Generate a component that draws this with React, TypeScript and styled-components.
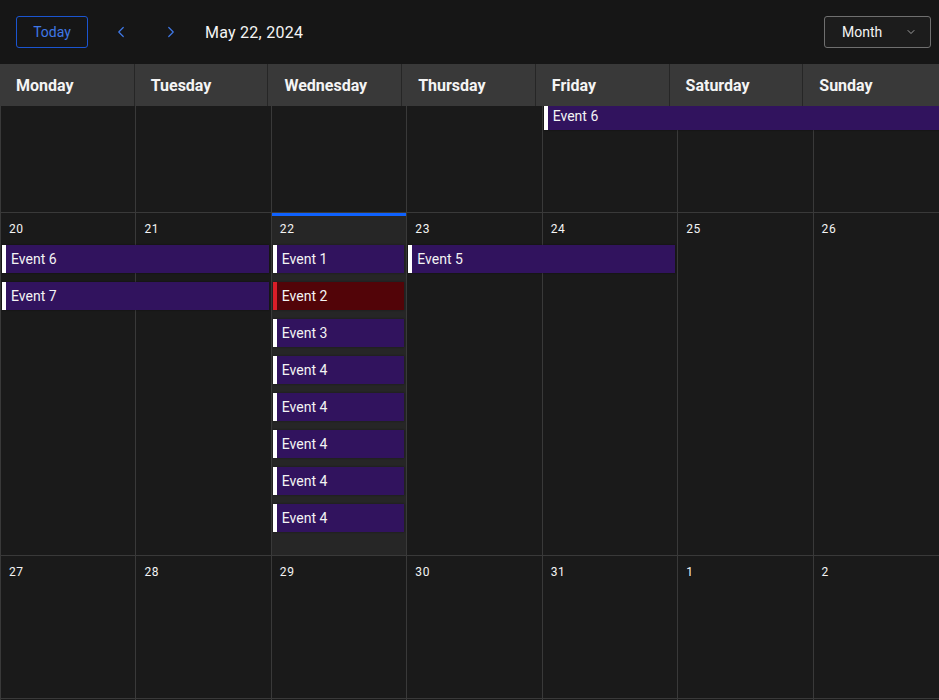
import React, { useLayoutEffect, useRef } from "react";
import styled, { createGlobalStyle, css } from "styled-components";
import { ChevronLeft, ChevronRight, ChevronDown } from "lucide-react";

const GlobalStyle = createGlobalStyle`
  html, body { margin: 0; padding: 0; background: #161616; }
  body { font-family: Roboto, "Noto Sans", "DejaVu Sans", sans-serif; color: #f4f4f4; }
  * { box-sizing: border-box; }
`;

const Page = styled.div`
  display: flex;
  flex-direction: column;
  height: 100vh;
  background: #161616;
  overflow: hidden;
`;

const Toolbar = styled.div`
  height: 64px;
  flex: none;
  display: flex;
  align-items: center;
  padding: 0 8px 0 16px;
  gap: 16px;
  background: #161616;
`;

const TodayButton = styled.button`
  height: 32px;
  width: 72px;
  border: 1px solid #1b55d0;
  border-radius: 3px;
  background: transparent;
  color: #3f78e6;
  font: 400 14px Roboto, "Noto Sans", sans-serif;
  padding: 0;
`;

const NavButton = styled.button`
  width: 34px;
  height: 32px;
  display: flex;
  align-items: center;
  justify-content: center;
  border: none;
  background: transparent;
  color: #3f78e6;
  padding: 0;
`;

const DateTitle = styled.div`
  font-size: 16px;
  font-weight: 400;
  color: #f4f4f4;
  letter-spacing: 0.25px;
  margin-left: 1px;
`;

const Spacer = styled.div`
  flex: 1;
`;

const ViewSelect = styled.div`
  width: 107px;
  height: 32px;
  border: 1px solid #6f6f6f;
  border-radius: 3px;
  background: #1c1c1c;
  display: flex;
  align-items: center;
  justify-content: space-between;
  padding: 0 13px 0 17px;
  font-size: 14px;
  color: #f4f4f4;
`;

const HeaderRow = styled.div`
  height: 42px;
  flex: none;
  display: grid;
  grid-template-columns: repeat(7, 1fr);
  background: #393939;
  padding-right: 3px;
`;

const HeaderCell = styled.div<{ $first?: boolean }>`
  display: flex;
  align-items: center;
  padding: 2px 0 0 16px;
  font-size: 16px;
  line-height: 20px;
  font-weight: 700;
  color: #f4f4f4;
  white-space: nowrap;
  min-width: 0;
  ${(p) => !p.$first && css`border-left: 1px solid #262626;`}
`;

const Body = styled.div`
  flex: 1;
  overflow: hidden;
  background: #1a1a1a;
`;

const Weeks = styled.div`
  width: 948px;
`;

const Week = styled.div<{ $rows: number }>`
  display: grid;
  grid-template-columns: repeat(7, 1fr);
  grid-template-rows: 32px repeat(${(p) => p.$rows}, 37px) minmax(14px, 1fr);
  min-height: 143px;
  border-top: 1px solid #393939;
`;

const DayCell = styled.div<{ $col: number; $today?: boolean }>`
  grid-column: ${(p) => p.$col};
  grid-row: 1 / -1;
  border-left: 1px solid #393939;
  background: ${(p) => (p.$today ? "#262626" : "#1a1a1a")};
  ${(p) => p.$today && css`box-shadow: inset 0 3px 0 #0f62fe;`}
  padding: 8px 0 0 8px;
`;

const DateLabel = styled.div`
  font-size: 12px;
  font-weight: 400;
  letter-spacing: 0.6px;
  color: #f4f4f4;
  line-height: 16px;
`;

const EventBar = styled.div<{ $danger?: boolean }>`
  z-index: 1;
  height: 28px;
  margin: 0 2px;
  display: flex;
  align-items: center;
  padding-left: 5px;
  font-size: 14px;
  color: #f4f4f4;
  white-space: nowrap;
  overflow: hidden;
  background: ${(p) => (p.$danger ? "#520408" : "#31135e")};
  border-left: 4px solid ${(p) => (p.$danger ? "#da1e28" : "#ffffff")};
  box-shadow: 0 0 2px rgba(0, 0, 0, 0.4);
`;

type Ev = { title: string; start: number; end: number; row: number; danger?: boolean };
type WeekData = { dates: number[]; today?: number; events: Ev[] };

const weeks: WeekData[] = [
  {
    dates: [13, 14, 15, 16, 17, 18, 19],
    events: [{ title: "Event 6", start: 5, end: 8, row: 1 }],
  },
  {
    dates: [20, 21, 22, 23, 24, 25, 26],
    today: 3,
    events: [
      { title: "Event 6", start: 1, end: 3, row: 1 },
      { title: "Event 7", start: 1, end: 3, row: 2 },
      { title: "Event 1", start: 3, end: 4, row: 1 },
      { title: "Event 2", start: 3, end: 4, row: 2, danger: true },
      { title: "Event 3", start: 3, end: 4, row: 3 },
      { title: "Event 4", start: 3, end: 4, row: 4 },
      { title: "Event 4", start: 3, end: 4, row: 5 },
      { title: "Event 4", start: 3, end: 4, row: 6 },
      { title: "Event 4", start: 3, end: 4, row: 7 },
      { title: "Event 4", start: 3, end: 4, row: 8 },
      { title: "Event 5", start: 4, end: 6, row: 1 },
    ],
  },
  {
    dates: [27, 28, 29, 30, 31, 1, 2],
    events: [],
  },
  {
    dates: [3, 4, 5, 6, 7, 8, 9],
    events: [],
  },
];

const dayNames = ["Monday", "Tuesday", "Wednesday", "Thursday", "Friday", "Saturday", "Sunday"];

export default function App() {
  const bodyRef = useRef<HTMLDivElement>(null);
  useLayoutEffect(() => {
    if (bodyRef.current) bodyRef.current.scrollTop = 37;
  }, []);

  return (
    <Page>
      <GlobalStyle />
      <Toolbar>
        <TodayButton>Today</TodayButton>
        <NavButton aria-label="Previous">
          <ChevronLeft size={18} strokeWidth={1.6} />
        </NavButton>
        <NavButton aria-label="Next">
          <ChevronRight size={18} strokeWidth={1.6} />
        </NavButton>
        <DateTitle>May 22, 2024</DateTitle>
        <Spacer />
        <ViewSelect>
          <span>Month</span>
          <ChevronDown size={12} strokeWidth={1.5} color="#c6c6c6" />
        </ViewSelect>
      </Toolbar>
      <HeaderRow>
        {dayNames.map((d, i) => (
          <HeaderCell key={d} $first={i === 0}>
            {d}
          </HeaderCell>
        ))}
      </HeaderRow>
      <Body ref={bodyRef}>
        <Weeks>
          {weeks.map((w, wi) => {
            const rows = w.events.reduce((m, e) => Math.max(m, e.row), 0);
            return (
              <Week key={wi} $rows={rows}>
                {w.dates.map((d, i) => (
                  <DayCell key={i} $col={i + 1} $today={w.today === i + 1}>
                    <DateLabel>{d}</DateLabel>
                  </DayCell>
                ))}
                {w.events.map((e, ei) => (
                  <EventBar
                    key={ei}
                    $danger={e.danger}
                    style={{ gridColumn: `${e.start} / ${e.end}`, gridRow: e.row + 1 }}
                  >
                    {e.title}
                  </EventBar>
                ))}
              </Week>
            );
          })}
        </Weeks>
      </Body>
    </Page>
  );
}
